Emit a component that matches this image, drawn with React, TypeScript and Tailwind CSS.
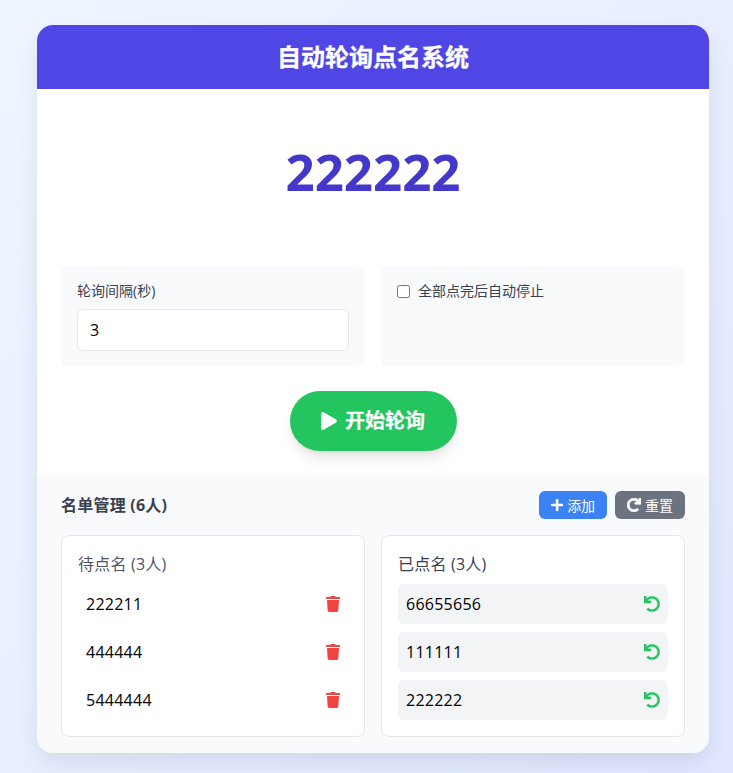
import { FaPlay, FaPlus, FaRedo, FaTrash, FaUndo } from "react-icons/fa";

const font = "font-['Open_Sans','Noto_Sans_CJK_SC',sans-serif]";
const pending = ["222211", "444444", "5444444"];
const done = ["66655656", "111111", "222222"];

export default function App() {
  return (
    <div className={`${font} min-h-[773px] bg-gradient-to-br from-[#eff6ff] to-[#e0e7ff] px-[37px] py-[25px] text-[16px]`}>
      <div className="w-[672px] overflow-hidden rounded-2xl bg-white shadow-[0_10px_25px_-3px_rgba(0,0,0,0.1)]">
        <header className="flex h-16 items-center justify-center bg-[#4f46e5]">
          <h1 className="text-[24px] font-bold text-white [-webkit-text-stroke:0.3px_white]">自动轮询点名系统</h1>
        </header>

        <div className="px-6 pt-6 pb-6">
          <div className="mb-[36px] flex h-[116px] items-center justify-center">
            <div className="text-[51px] leading-none font-bold text-[#4338ca]">222222</div>
          </div>

          <div className="grid grid-cols-2 gap-4">
            <div className="h-[102px] rounded-lg bg-[#f9fafb] p-4">
              <label className="mb-2 block text-[14px] leading-[20px] text-[#374151]">轮询间隔(秒)</label>
              <input
                readOnly
                value="3"
                className="h-[42px] w-full rounded-md border border-[#e5e7eb] bg-white px-3 text-[16px] text-black outline-none"
              />
            </div>
            <div className="h-[102px] rounded-lg bg-[#f9fafb] p-4">
              <label className="flex items-center text-[14px] leading-[20px] text-[#374151]">
                <input type="checkbox" className="mr-2 h-[13px] w-[13px]" />
                <span>全部点完后自动停止</span>
              </label>
            </div>
          </div>

          <div className="mt-6 flex justify-center">
            <button className="flex h-[60px] w-[167px] items-center justify-center gap-2 rounded-full bg-[#22c55e] text-[20px] font-bold text-white shadow-lg [-webkit-text-stroke:0.2px_white]">
              <FaPlay className="h-[18px] w-[16px]" />
              开始轮询
            </button>
          </div>
        </div>

        <section className="bg-[#f9fafb] px-6 pt-4 pb-4">
          <div className="mb-4 flex h-7 items-center justify-between">
            <h2 className="text-[16px] font-bold tracking-[0.22px] text-[#374151]">名单管理 (6人)</h2>
            <div className="flex gap-2">
              <button className="flex h-7 w-[68px] items-center justify-center gap-1 rounded-md bg-[#3b82f6] text-[14px] text-white">
                <FaPlus className="h-[14px] w-[12.25px]" />
                添加
              </button>
              <button className="flex h-7 w-[70px] items-center justify-center gap-1 rounded-md bg-[#6b7280] text-[14px] text-white">
                <FaRedo className="h-[14px] w-[14px]" stroke="currentColor" strokeWidth={30} />
                重置
              </button>
            </div>
          </div>

          <div className="grid grid-cols-2 gap-4">
            <div className="h-[202px] rounded-lg border border-[#e5e7eb] bg-white p-4">
              <h3 className="mb-2 text-[16px] leading-[24px] tracking-[0.2px] text-[#4b5563]">待点名 (3人)</h3>
              <div className="flex flex-col gap-2">
                {pending.map((n) => (
                  <div key={n} className="flex h-10 items-center justify-between rounded-md px-2 text-black">
                    <span className="tracking-[0.25px]">{n}</span>
                    <FaTrash className="h-[16px] w-[14px] text-[#ef4444]" />
                  </div>
                ))}
              </div>
            </div>
            <div className="h-[202px] rounded-lg border border-[#e5e7eb] bg-white p-4">
              <h3 className="mb-2 text-[16px] leading-[24px] tracking-[0.2px] text-[#374151]">已点名 (3人)</h3>
              <div className="flex flex-col gap-2">
                {done.map((n) => (
                  <div key={n} className="flex h-10 items-center justify-between rounded-md bg-[#f3f4f6] px-2 text-black">
                    <span className="tracking-[0.25px]">{n}</span>
                    <FaUndo className="h-[16px] w-[16px] text-[#22c55e]" stroke="currentColor" strokeWidth={8} />
                  </div>
                ))}
              </div>
            </div>
          </div>
        </section>
      </div>
    </div>
  );
}
